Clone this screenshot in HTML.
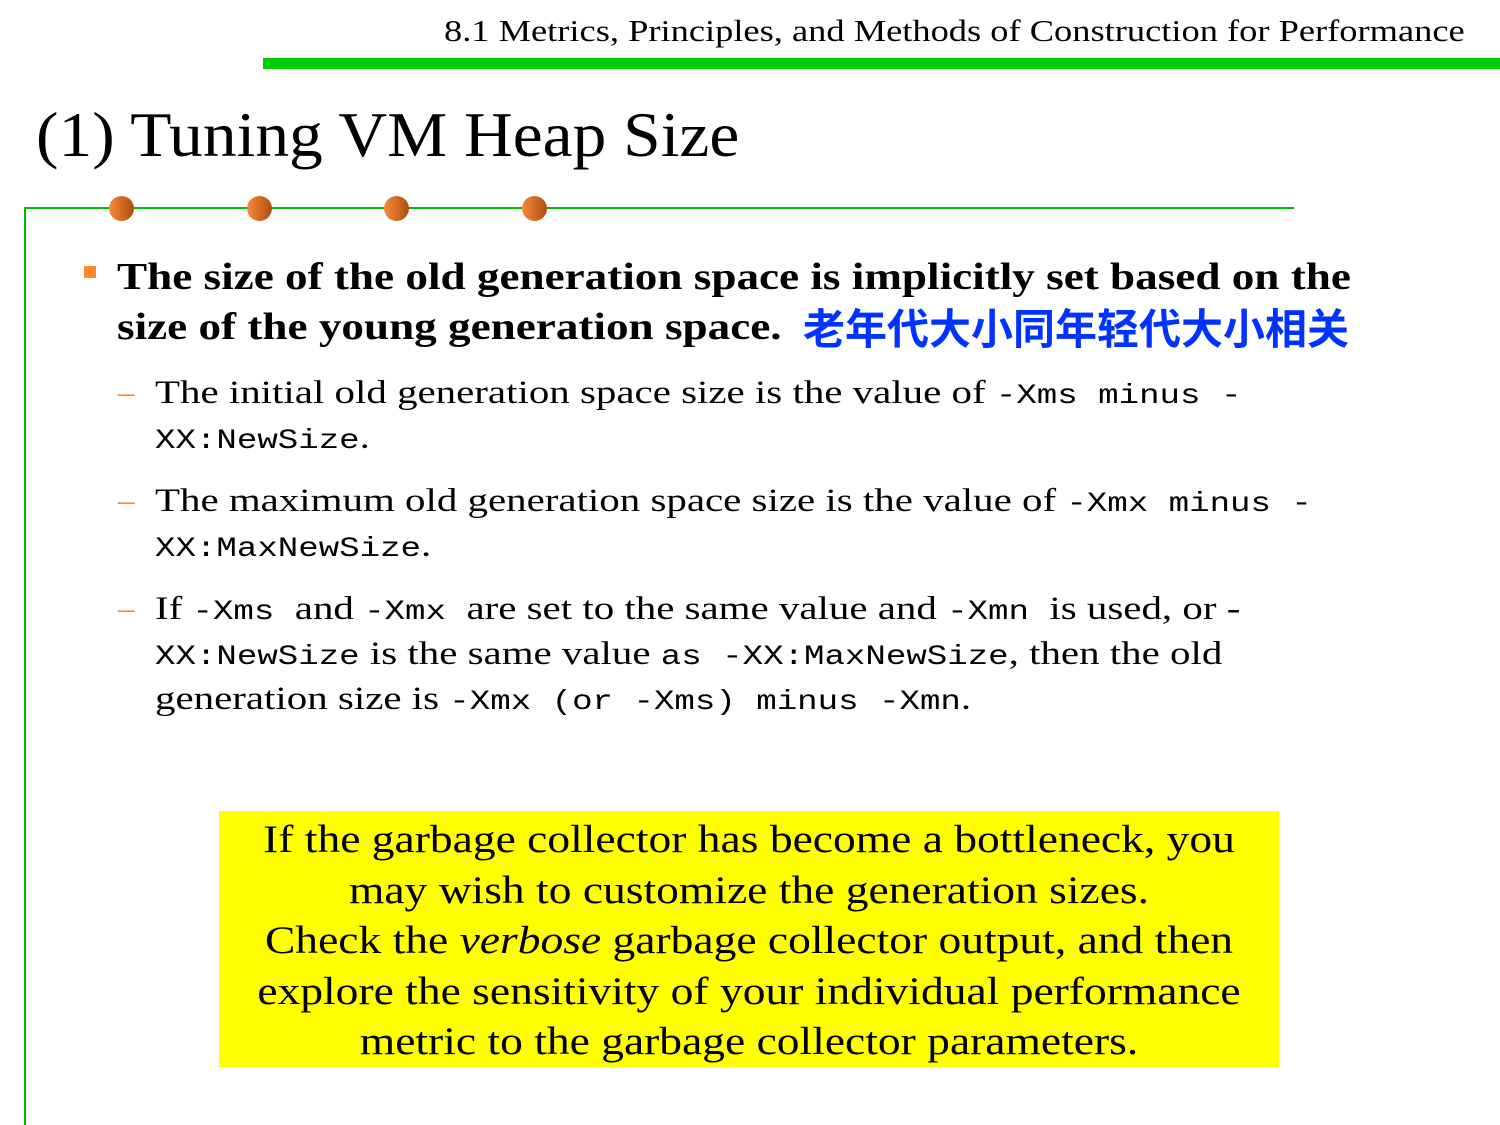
<!DOCTYPE html>
<html><head><meta charset="utf-8"><style>
body{margin:0;width:1500px;height:1125px;background:#fff;position:relative;overflow:hidden;font-family:"Liberation Serif",serif;color:#000}
.a{position:absolute;white-space:nowrap}
.m{font-family:"Liberation Mono",monospace;font-size:27.5px}
.dot{position:absolute;width:25px;height:25px;border-radius:50%;background:linear-gradient(90deg,#f58a3a,#b04e10);top:196px}
.s{position:absolute;left:155px;white-space:nowrap;font-size:33px;line-height:40px;transform-origin:left center;transform:scaleX(1.24)}
.d{position:absolute;left:118px;color:#ff8833;font-size:33px;line-height:40px}
.b{position:absolute;left:117px;white-space:nowrap;font-size:38px;font-weight:bold;line-height:50px;transform-origin:left center;transform:scaleX(1.188)}
</style></head><body>
<div class="a" style="right:35px;top:13px;font-size:31px;transform-origin:right center;transform:scaleX(1.175)">8.1 Metrics, Principles, and Methods of Construction for Performance</div>
<div class="a" style="left:263px;top:58px;width:1237px;height:11px;background:#00cc00"></div>
<div class="a" style="left:36px;top:98px;font-size:64px;transform-origin:left center;transform:scaleX(1.054)">(1) Tuning VM Heap Size</div>
<div class="a" style="left:24px;top:207px;width:1270px;height:2px;background:#00bb00"></div>
<div class="a" style="left:24px;top:207px;width:2px;height:918px;background:#00bb00"></div>
<div class="dot" style="left:109px"></div><div class="dot" style="left:247px"></div><div class="dot" style="left:384px"></div><div class="dot" style="left:522px"></div>
<div class="a" style="left:84px;top:266px;width:12px;height:12px;background:#ff8833"></div>
<div class="b" style="top:252px">The size of the old generation space is implicitly set based on the</div>
<div class="b" style="top:302px">size of the young generation space.</div>
<div class="a" style="left:803px;top:302px;font-size:42px;line-height:50px;font-weight:bold;color:#0033ff;font-family:'Noto Sans CJK SC',sans-serif">老年代大小同年轻代大小相关</div>

<div class="d" style="top:373px">–</div>
<div class="s" style="top:373px">The initial old generation space size is the value of <span class="m">-Xms minus -</span></div>
<div class="s" style="top:418px"><span class="m">XX:NewSize</span>.</div>
<div class="d" style="top:481px">–</div>
<div class="s" style="top:481px">The maximum old generation space size is the value of <span class="m">-Xmx minus -</span></div>
<div class="s" style="top:526px"><span class="m">XX:MaxNewSize</span>.</div>
<div class="d" style="top:589px">–</div>
<div class="s" style="top:589px">If <span class="m">-Xms</span> &nbsp;and <span class="m">-Xmx</span> &nbsp;are set to the same value and <span class="m">-Xmn</span> &nbsp;is used, or -</div>
<div class="s" style="top:634px"><span class="m">XX:NewSize</span> is the same value <span class="m">as -XX:MaxNewSize</span>, then the old</div>
<div class="s" style="top:679px">generation size is <span class="m">-Xmx (or -Xms) minus -Xmn</span>.</div>

<div class="a" style="left:219px;top:811px;width:1060px;height:256px;background:#ffff00"></div>
<div class="a" style="left:219px;top:815px;width:1060px;text-align:center;font-size:39px;line-height:50.5px;transform:scaleX(1.167)">If the garbage collector has become a bottleneck, you<br>may wish to customize the generation sizes.<br>Check the <i>verbose</i> garbage collector output, and then<br>explore the sensitivity of your individual performance<br>metric to the garbage collector parameters.</div>
</body></html>
